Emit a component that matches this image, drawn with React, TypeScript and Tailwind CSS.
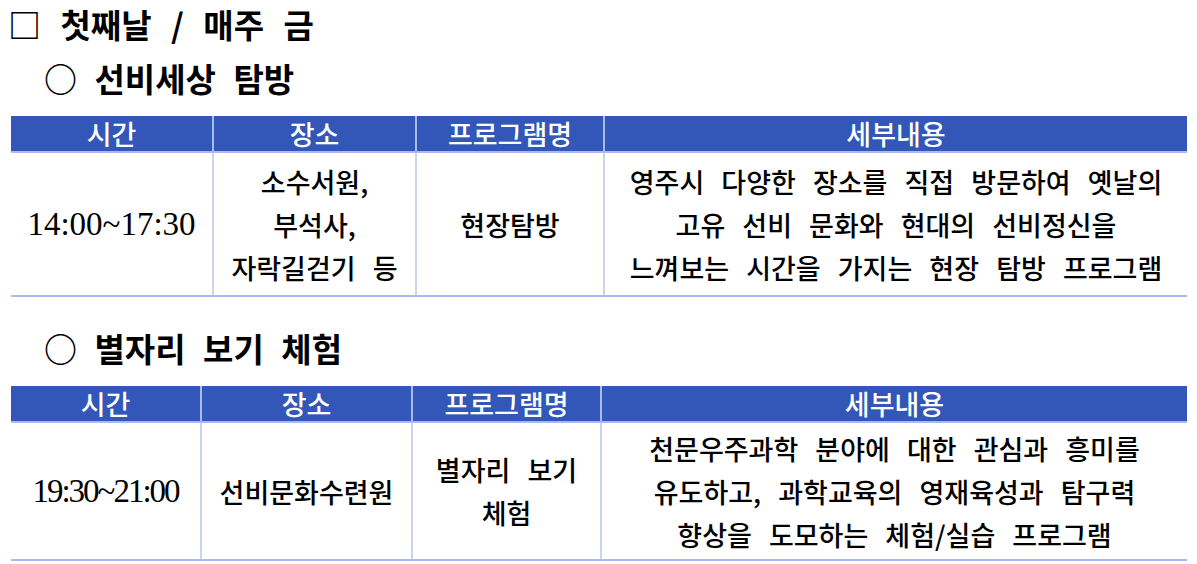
import React from 'react';

type Row = {time: string; place: string[]; name: string[]; detail: string[]; tight?: boolean};

const HEAD = ['시간', '장소', '프로그램명', '세부내용'];

function ScheduleTable({cols, row, bodyH}: {cols: string; row: Row; bodyH: string}) {
  return (
    <div className="mx-[11px] w-[1176px]">
      {/* header */}
      <div className={`grid ${cols} h-[37px] bg-[#3257b8] border-b-2 border-[#a9bbec] text-white text-[27px] font-medium leading-[35px]`}>
        {HEAD.map((h, i) => (
          <div key={h} className={`text-center ${i > 0 ? 'border-l-2 border-[#a9bbec]' : ''}`}>
            {h}
          </div>
        ))}
      </div>
      {/* body */}
      <div className={`grid ${cols} ${bodyH} border-b-2 border-[#a9bbec] text-[27px] font-medium leading-[43px] [word-spacing:11px]`}>
        <div
          className={`flex items-center justify-center font-['Liberation_Serif',serif] font-normal text-[33px] ${
            row.tight ? 'tracking-[-2px]' : ''
          }`}
        >
          {row.time}
        </div>
        <div className="flex flex-col items-center justify-center border-l-2 border-[#c9d4f2]">
          {row.place.map((p) => (
            <span key={p}>{p}</span>
          ))}
        </div>
        <div className="flex flex-col items-center justify-center border-l-2 border-[#c9d4f2]">
          {row.name.map((p) => (
            <span key={p}>{p}</span>
          ))}
        </div>
        <div className="flex flex-col items-center justify-center border-l-2 border-[#c9d4f2]">
          {row.detail.map((p) => (
            <span key={p}>{p}</span>
          ))}
        </div>
      </div>
    </div>
  );
}

export default function App() {
  return (
    <div className="w-[1197px] h-[564px] overflow-hidden bg-white text-black font-['Noto_Sans_CJK_KR',sans-serif]">
      <div className="h-[48px] pl-[8px] text-[33px] font-bold leading-[48px] [word-spacing:12px]">
        □ 첫째날 / 매주 금
      </div>
      <div className="mt-[6px] h-[48px] pl-[44px] text-[33px] font-bold leading-[48px] [word-spacing:10px]">
        ○ 선비세상 탐방
      </div>
      <div className="mt-[14px]">
        <ScheduleTable
          cols="grid-cols-[201px_203px_188px_1fr]"
          bodyH="h-[144px]"
          row={{
            time: '14:00~17:30',
            place: ['소수서원,', '부석사,', '자락길걷기 등'],
            name: ['현장탐방'],
            detail: [
              '영주시 다양한 장소를 직접 방문하여 옛날의',
              '고유 선비 문화와 현대의 선비정신을',
              '느껴보는 시간을 가지는 현장 탐방 프로그램',
            ],
          }}
        />
      </div>
      <div className="mt-[27px] h-[48px] pl-[44px] text-[33px] font-bold leading-[48px] [word-spacing:10px]">
        ○ 별자리 보기 체험
      </div>
      <div className="mt-[14px]">
        <ScheduleTable
          cols="grid-cols-[189px_211px_189px_1fr]"
          bodyH="h-[138px]"
          row={{
            time: '19:30~21:00',
            tight: true,
            place: ['선비문화수련원'],
            name: ['별자리 보기', '체험'],
            detail: [
              '천문우주과학 분야에 대한 관심과 흥미를',
              '유도하고, 과학교육의 영재육성과 탐구력',
              '향상을 도모하는 체험/실습 프로그램',
            ],
          }}
        />
      </div>
    </div>
  );
}
